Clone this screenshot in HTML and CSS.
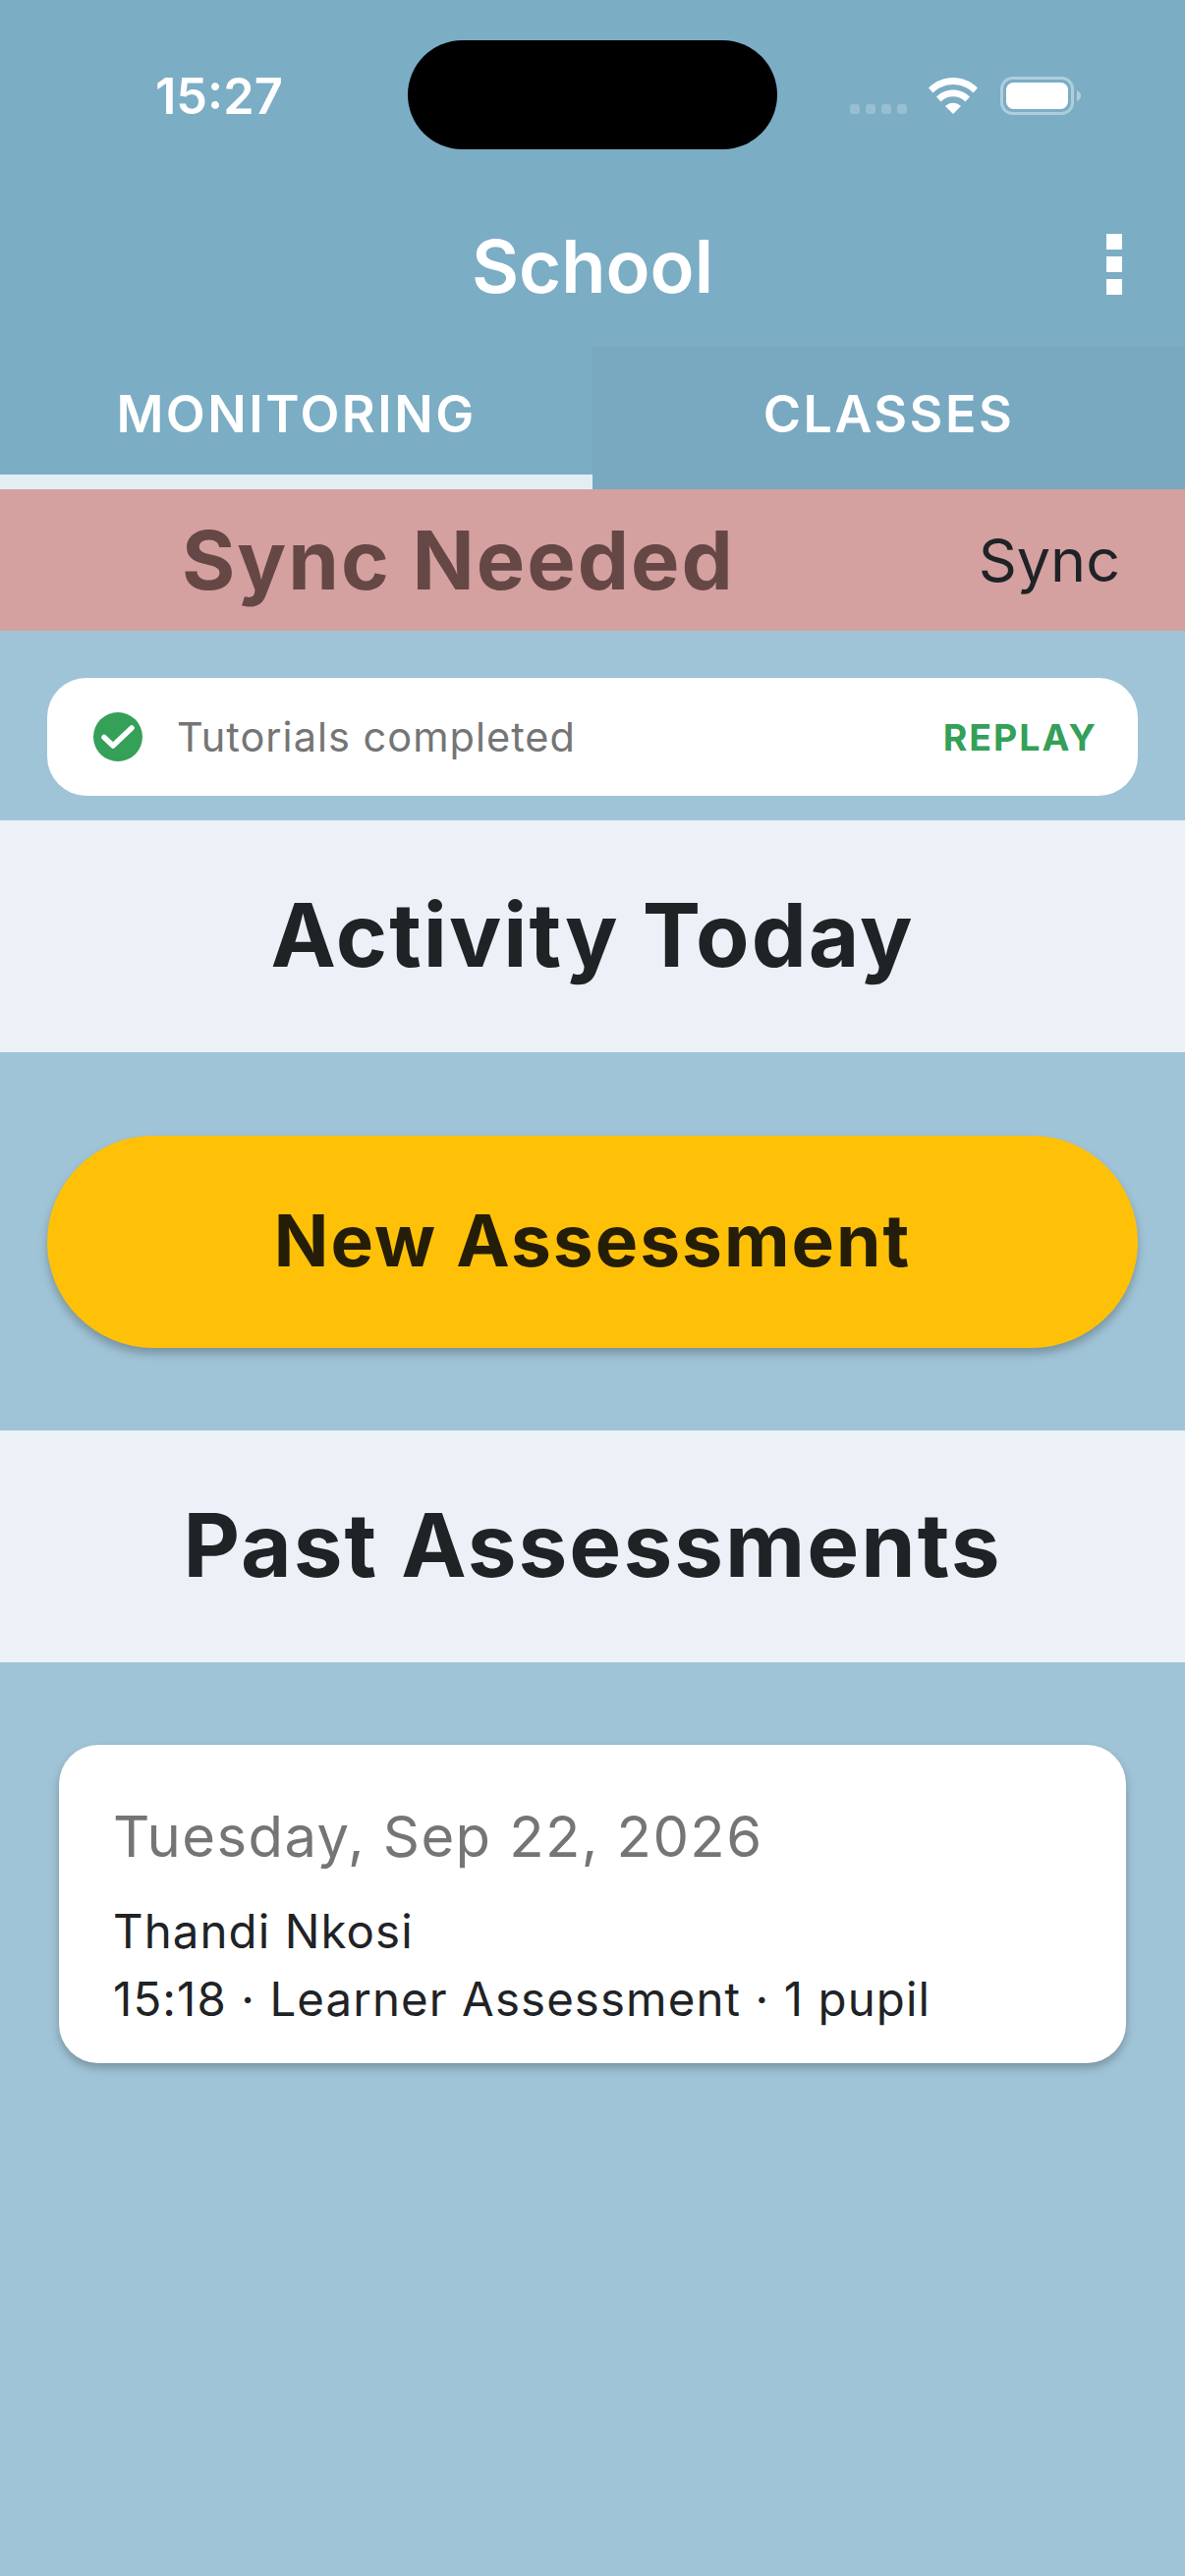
FILE: index.html
```html
<!DOCTYPE html>
<html lang="en">
<head>
    <meta charset="UTF-8">
    <meta name="viewport" content="width=device-width, initial-scale=1.0">
    <title>School</title>
    <link rel="stylesheet" href="styles.css">
</head>
<body>
    <div class="app">
        <header class="app-header">
            <div class="status-bar">
                <span class="status-time">15:27</span>
                <div class="island"></div>
                <svg class="status-icons" width="235" height="39" viewBox="0 0 235 39">
                    <g fill="#ffffff" fill-opacity="0.22">
                        <rect x="0" y="28" width="10" height="10" rx="3"/>
                        <rect x="16" y="28" width="10" height="10" rx="3"/>
                        <rect x="32" y="28" width="10" height="10" rx="3"/>
                        <rect x="48" y="28" width="10" height="10" rx="3"/>
                    </g>
                    <g fill="#ffffff" transform="translate(80 1)">
                        <path d="M0 10.5C13.5 -3.5 36.5 -3.5 50 10.5L45.5 15.5C34 4 16 4 4.5 15.5Z"/>
                        <path d="M8 19.5C17 10 33 10 42 19.5L37.5 24.5C31 17.5 19 17.5 12.5 24.5Z"/>
                        <path d="M17 29C21.5 24.5 28.5 24.5 33 29L25 37Z"/>
                    </g>
                    <rect x="154.5" y="1.5" width="72" height="36" rx="11" fill="none" stroke="#ffffff" stroke-opacity="0.4" stroke-width="3"/>
                    <rect x="159" y="6" width="63" height="27" rx="7.5" fill="#ffffff"/>
                    <path d="M231 14C233.500 15 235 17 235 19.500C235 22 233.500 24 231 25Z" fill="#ffffff" fill-opacity="0.4"/>
                </svg>
            </div>
            <div class="title-row">
                <h1>School</h1>
                <div class="menu-dots"><i></i><i></i><i></i></div>
            </div>
            <nav class="tabs">
                <div class="tab active">MONITORING</div>
                <div class="tab">CLASSES</div>
            </nav>
        </header>

        <div class="sync-bar">
            <span class="sync-title">Sync Needed</span>
            <span class="sync-link">Sync</span>
        </div>

        <div class="tutorial-card">
            <svg class="check" width="50" height="50" viewBox="0 0 50 50">
                <circle cx="25" cy="25" r="25" fill="#34a058"/>
                <path d="M11 25.500L20 34L39 16" fill="none" stroke="#ffffff" stroke-width="5.500" stroke-linecap="round" stroke-linejoin="round"/>
            </svg>
            <span class="tutorial-text">Tutorials completed</span>
            <span class="replay">REPLAY</span>
        </div>

        <h2 class="section-title first">Activity Today</h2>

        <div class="new-btn">New Assessment</div>

        <h2 class="section-title">Past Assessments</h2>

        <div class="past-card">
            <div class="past-date">Tuesday, Sep 22, 2026</div>
            <div class="past-line name">Thandi Nkosi</div>
            <div class="past-line">15:18 · Learner Assessment · 1 pupil</div>
        </div>
    </div>
</body>
</html>
```

FILE: styles.css
```css
* {
    box-sizing: border-box;
}

html, body {
    margin: 0;
    height: 100%;
    overflow: hidden;
}

body {
    font-family: Inter, "Liberation Sans", sans-serif;
    background-color: #a0c4d7;
    color: #1f2326;
}

.app {
    width: 1206px;
    height: 2622px;
}

.app-header {
    background-color: #7badc5;
    color: white;
}

.status-bar {
    position: relative;
    height: 194px;
    padding: 0 106px 0 158px;
    display: flex;
    align-items: center;
    justify-content: space-between;
}

.status-time {
    font-size: 50.500px;
    font-weight: 600;
}

.island {
    position: absolute;
    left: 415px;
    top: 41px;
    width: 376px;
    height: 111px;
    border-radius: 56px;
    background-color: black;
}

.status-icons {
    display: block;
    margin-top: 1px;
}

.title-row {
    position: relative;
    height: 159px;
    display: flex;
    align-items: center;
    justify-content: center;
    padding-bottom: 6px;
}

.title-row h1 {
    margin: 0;
    font-size: 74px;
    font-weight: 600;
}

.menu-dots {
    position: absolute;
    right: 64px;
    top: 44px;
    display: flex;
    flex-direction: column;
    gap: 7px;
}

.menu-dots i {
    display: block;
    width: 16px;
    height: 16px;
    background-color: white;
}

.tabs {
    display: flex;
    height: 145px;
}

.tab {
    flex: 1;
    display: flex;
    align-items: center;
    justify-content: center;
    padding-bottom: 8px;
    font-size: 52px;
    font-weight: 600;
    letter-spacing: 2.500px;
    background-color: #79a9c1;
}

.tab.active {
    background-color: #7badc5;
    box-shadow: inset 0 -15px 0 #e3eef4;
}

.sync-bar {
    height: 144px;
    background-color: #d5a0a0;
    display: flex;
    align-items: center;
    padding: 0 66px 0 185px;
    justify-content: space-between;
}

.sync-title {
    font-size: 83px;
    font-weight: 700;
    color: #654845;
    letter-spacing: 2px;
}

.sync-link {
    font-size: 61px;
}

.tutorial-card {
    margin: 48px 48px 0;
    height: 120px;
    border-radius: 40px;
    background-color: white;
    display: flex;
    align-items: center;
    padding: 0 41px 0 47px;
}

.tutorial-text {
    margin-left: 35px;
    font-size: 41.500px;
    letter-spacing: 1px;
    color: #757575;
}

.replay {
    margin-left: auto;
    font-size: 37.500px;
    font-weight: 700;
    letter-spacing: 2px;
    color: #34a058;
}

.section-title {
    margin: 0;
    height: 236px;
    display: flex;
    align-items: center;
    justify-content: center;
    padding-bottom: 4px;
    background-color: #ebf1f6;
    font-size: 89px;
    font-weight: 700;
    letter-spacing: 2px;
}

.section-title.first {
    margin-top: 25px;
}

.new-btn {
    margin: 85px 48px 84px;
    height: 216px;
    border-radius: 108px;
    background-color: #ffc107;
    box-shadow: 0 6px 10px rgba(0,0,0,0.25);
    display: flex;
    align-items: center;
    justify-content: center;
    padding-bottom: 3px;
    font-size: 73px;
    font-weight: 700;
    letter-spacing: 2px;
    color: #241d08;
}

.past-card {
    margin: 84px 60px 0;
    height: 324px;
    border-radius: 40px;
    background-color: white;
    box-shadow: 0 5px 10px rgba(0,0,0,0.25);
    padding: 58px 55px 0;
}

.past-date {
    font-size: 58px;
    letter-spacing: 1.400px;
    color: #757575;
}

.past-line {
    font-size: 47.400px;
    letter-spacing: 1.100px;
    margin-top: 12px;
}

.past-line.name {
    margin-top: 33px;
}
```
